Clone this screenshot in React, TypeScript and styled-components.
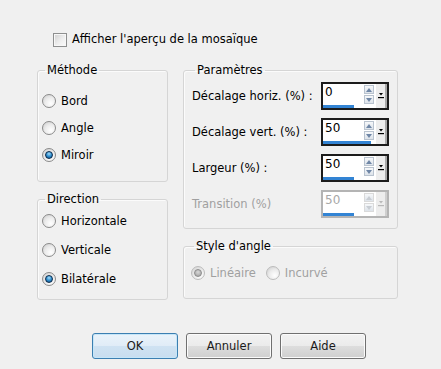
import styled, { createGlobalStyle } from "styled-components";
import React from "react";

const GlobalStyle = createGlobalStyle`
  html, body {
    margin: 0;
    padding: 0;
    background: #f0f0f0;
  }
  body {
    font-family: "DejaVu Sans", Verdana, sans-serif;
    font-size: 11.5px;
    color: #000;
  }
`;

const Page = styled.div`
  width: 441px;
  height: 369px;
  box-sizing: border-box;
  padding: 32px 0 0 37px;
  background: #f0f0f0;
  display: flex;
  flex-direction: column;
`;

const CheckRow = styled.label`
  display: flex;
  align-items: center;
  gap: 5px;
  margin-left: 16px;
  height: 15px;
  line-height: 15px;
`;

const CheckBox = styled.span`
  width: 12px;
  height: 12px;
  border: 1px solid #8e8f8f;
  background: linear-gradient(135deg, #cfcfcf 0%, #eeeeee 55%, #fbfbfb 100%);
  box-shadow: inset 0 0 0 1px #f7f7f7;
`;

const Columns = styled.div`
  display: flex;
  gap: 15px;
  margin-top: 16px;
`;

const Column = styled.div<{ $width: number }>`
  display: flex;
  flex-direction: column;
  width: ${(p) => p.$width}px;
`;

const Group = styled.fieldset<{ $height: number; $pad: string; $gap?: number }>`
  margin: 0;
  min-width: 0;
  box-sizing: border-box;
  height: ${(p) => p.$height}px;
  padding: ${(p) => p.$pad};
  border: 1px solid #d5d5d5;
  border-radius: 3px;
  box-shadow: inset 1px 1px 0 #fbfbfb;
  & + & {
    margin-top: ${(p) => p.$gap ?? 9}px;
  }
`;

const Legend = styled.legend`
  margin-left: 3px;
  padding: 0 2px;
  line-height: 14px;
  height: 14px;
`;

const RadioList = styled.div<{ $row: number; $top: number }>`
  display: flex;
  flex-direction: column;
  padding-top: ${(p) => p.$top}px;
  & > * {
    height: ${(p) => p.$row}px;
  }
`;

const RadioInline = styled.div`
  display: flex;
  padding-top: 10px;
  height: 20px;
  gap: 10px;
`;

const RadioRow = styled.label<{ $disabled?: boolean }>`
  display: flex;
  align-items: center;
  gap: 5px;
  color: ${(p) => (p.$disabled ? "#a0a0a0" : "#000")};
`;

const Circle = styled.span<{ $disabled?: boolean }>`
  width: 12px;
  height: 12px;
  border-radius: 50%;
  border: 1px solid ${(p) => (p.$disabled ? "#bcbcbc" : "#8a8a8a")};
  background: radial-gradient(circle at 65% 70%, #ffffff 0%, #ebebeb 50%, #c9c9c9 100%);
  display: flex;
  align-items: center;
  justify-content: center;
`;

const Dot = styled.span<{ $disabled?: boolean }>`
  width: 8px;
  height: 8px;
  border-radius: 50%;
  border: 1px solid ${(p) => (p.$disabled ? "#8c8c8c" : "#0d2a4a")};
  background: ${(p) =>
    p.$disabled
      ? "radial-gradient(circle at 50% 35%, #d8d8d8 0%, #9c9c9c 100%)"
      : "radial-gradient(circle at 50% 30%, #a8dcf8 0%, #2f8fcf 50%, #0f4f86 100%)"};
  box-sizing: border-box;
`;

function Radio({
  label,
  checked,
  disabled,
}: {
  label: string;
  checked?: boolean;
  disabled?: boolean;
}) {
  return (
    <RadioRow $disabled={disabled}>
      <Circle $disabled={disabled}>{checked && <Dot $disabled={disabled} />}</Circle>
      {label}
    </RadioRow>
  );
}

const ParamList = styled.div`
  display: flex;
  flex-direction: column;
  gap: 8px;
  padding-top: 5px;
`;

const ParamRow = styled.div<{ $disabled?: boolean }>`
  display: flex;
  align-items: center;
  justify-content: space-between;
  color: ${(p) => (p.$disabled ? "#a0a0a0" : "#000")};
`;

const Spin = styled.div<{ $disabled?: boolean }>`
  display: flex;
  width: 68px;
  height: 28px;
  box-sizing: border-box;
  border: 2px solid ${(p) => (p.$disabled ? "#b4b4b4" : "#1c1c1c")};
  background: #fff;
`;

const Field = styled.div`
  flex: 1;
  display: flex;
  flex-direction: column;
`;

const FieldTop = styled.div`
  display: flex;
  height: 20px;
  padding-right: 1px;
`;

const Value = styled.span<{ $disabled?: boolean }>`
  flex: 1;
  padding: 1px 0 0 2px;
  font-size: 12px;
  line-height: 15px;
  color: ${(p) => (p.$disabled ? "#a8a8a8" : "#000")};
`;

const Arrows = styled.div`
  display: flex;
  flex-direction: column;
  width: 10px;
  gap: 1px;
  padding-top: 1px;
`;

const ArrowBtn = styled.div<{ $disabled?: boolean }>`
  border: 1px solid ${(p) => (p.$disabled ? "#dadada" : "#b9c3cf")};
  box-sizing: border-box;
  height: 9px;
  background: linear-gradient(#f6f8fa, #dde3ea);
  display: flex;
  align-items: center;
  justify-content: center;
`;

const Bar = styled.div`
  margin-top: auto;
  height: 3px;
  background: #3384d4;
`;

const DropBtn = styled.div<{ $disabled?: boolean }>`
  width: 12px;
  box-sizing: border-box;
  border-left: 1px solid #ffffff;
  border-right: 2px solid ${(p) => (p.$disabled ? "#cfcfcf" : "#a9a9a9")};
  background: #ededed;
  display: flex;
  align-items: center;
  justify-content: center;
`;

function Tri({ up, disabled }: { up?: boolean; disabled?: boolean }) {
  const c = disabled ? "#c8cdd3" : "#6f86a6";
  return (
    <svg width="6" height="4" viewBox="0 0 6 4">
      <path d={up ? "M0 4 L3 0 L6 4 Z" : "M0 0 L3 4 L6 0 Z"} fill={c} />
    </svg>
  );
}

function SpinBox({
  value,
  bar,
  disabled,
}: {
  value: string;
  bar: number;
  disabled?: boolean;
}) {
  const ink = disabled ? "#b8b8b8" : "#000";
  return (
    <Spin $disabled={disabled}>
      <Field>
        <FieldTop>
          <Value $disabled={disabled}>{value}</Value>
          <Arrows>
            <ArrowBtn $disabled={disabled}>
              <Tri up disabled={disabled} />
            </ArrowBtn>
            <ArrowBtn $disabled={disabled}>
              <Tri disabled={disabled} />
            </ArrowBtn>
          </Arrows>
        </FieldTop>
        <Bar style={{ width: bar }} />
      </Field>
      <DropBtn $disabled={disabled}>
        <svg width="6" height="6" viewBox="0 0 6 6">
          <path d="M1 0 L5 0 L3 2.5 Z" fill={ink} />
          <rect x="0" y="4" width="6" height="1.2" fill={ink} />
        </svg>
      </DropBtn>
    </Spin>
  );
}

const Buttons = styled.div`
  display: flex;
  gap: 8px;
  margin-top: 33px;
  margin-left: 55px;
`;

const Button = styled.button<{ $default?: boolean }>`
  width: 86px;
  height: 26px;
  box-sizing: border-box;
  font-family: inherit;
  font-size: 11.5px;
  font-weight: 400;
  color: #1a1a1a;
  border-radius: 3px;
  border: 1px solid ${(p) => (p.$default ? "#3c7fb1" : "#707070")};
  background: ${(p) =>
    p.$default
      ? "linear-gradient(#eaf3fa 0%, #e0ecf7 50%, #cfe2f2 51%, #c8ddef 100%)"
      : "linear-gradient(#f2f2f2 0%, #ebebeb 50%, #dddddd 51%, #cfcfcf 100%)"};
  box-shadow: inset 0 0 0 1px ${(p) => (p.$default ? "#c6e6f8" : "#fbfbfb")};
`;

const params = [
  { label: "Décalage horiz. (%) :", value: "0", bar: 31 },
  { label: "Décalage vert. (%) :", value: "50", bar: 48 },
  { label: "Largeur (%) :", value: "50", bar: 31 },
  { label: "Transition (%)", value: "50", bar: 31, disabled: true },
];

export default function App() {
  return (
    <>
      <GlobalStyle />
      <Page>
        <CheckRow>
          <CheckBox />
          Afficher l'aperçu de la mosaïque
        </CheckRow>
        <Columns>
          <Column $width={131}>
            <Group $height={119} $pad="0 4px">
              <Legend>Méthode</Legend>
              <RadioList $row={27} $top={10}>
                <Radio label="Bord" />
                <Radio label="Angle" />
                <Radio label="Miroir" checked />
              </RadioList>
            </Group>
            <Group $height={108} $pad="0 4px" $gap={9}>
              <Legend>Direction</Legend>
              <RadioList $row={29} $top={0}>
                <Radio label="Horizontale" />
                <Radio label="Verticale" />
                <Radio label="Bilatérale" checked />
              </RadioList>
            </Group>
          </Column>
          <Column $width={215}>
            <Group $height={166} $pad="0 8px 0 8px">
              <Legend>Paramètres</Legend>
              <ParamList>
                {params.map((p) => (
                  <ParamRow key={p.label} $disabled={p.disabled}>
                    {p.label}
                    <SpinBox value={p.value} bar={p.bar} disabled={p.disabled} />
                  </ParamRow>
                ))}
              </ParamList>
            </Group>
            <Group $height={60} $pad="0 7px" $gap={10}>
              <Legend>Style d'angle</Legend>
              <RadioInline>
                <Radio label="Linéaire" checked disabled />
                <Radio label="Incurvé" disabled />
              </RadioInline>
            </Group>
          </Column>
        </Columns>
        <Buttons>
          <Button $default>OK</Button>
          <Button>Annuler</Button>
          <Button>Aide</Button>
        </Buttons>
      </Page>
    </>
  );
}
